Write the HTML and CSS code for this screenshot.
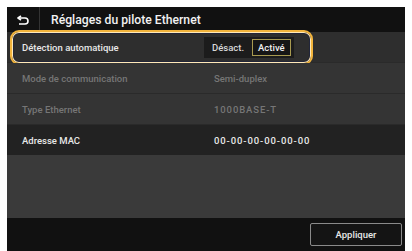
FILE: index.html
```html
<!DOCTYPE html>
<html lang="fr">
  <head>
    <meta charset="UTF-8" />
    <meta name="viewport" content="width=device-width, initial-scale=1.0" />
    <title>Réglages du pilote Ethernet</title>
    <link rel="stylesheet" href="styles.css">
  </head>
  <body>
    <div class="screen">
      <header class="topbar">
        <span class="back">
          <svg width="12" height="10" viewBox="0 0 12 10">
            <path d="M4 1 L1 3 L4 5" fill="none" stroke="#fff" stroke-width="1.6" stroke-linejoin="round" />
            <path d="M1.5 3 H8 A3 3 0 0 1 8 9 H2" fill="none" stroke="#fff" stroke-width="1.6" />
          </svg>
        </span>
        <span class="title">Réglages du pilote Ethernet</span>
      </header>
      <div class="list">
        <div class="row selected">
          <span class="label">Détection automatique</span>
          <span class="toggle">
            <span class="opt">Désact.</span>
            <span class="opt on">Activé</span>
          </span>
        </div>
        <div class="row disabled">
          <span class="label">Mode de communication</span>
          <span class="value">Semi-duplex</span>
        </div>
        <div class="row disabled">
          <span class="label">Type Ethernet</span>
          <span class="value wide">1000BASE-T</span>
        </div>
        <div class="row dark">
          <span class="label">Adresse MAC</span>
          <span class="value wide">00-00-00-00-00-00</span>
        </div>
        <div class="empty"></div>
      </div>
      <footer class="bottombar">
        <button class="apply">Appliquer</button>
      </footer>
    </div>
  </body>
</html>
```

FILE: styles.css
```css
body,
html {
  margin: 0;
  background-color: #fff;
  font-family: Roboto, "Liberation Sans", sans-serif;
}

body {
  padding: 7px 7px 0 7px;
}

.screen {
  width: 398px;
  height: 244px;
  background-color: #111;
  display: flex;
  flex-direction: column;
}

.topbar {
  height: 25px;
  display: flex;
  align-items: center;
  flex-shrink: 0;
}

.back {
  width: 33px;
  height: 25px;
  display: flex;
  align-items: center;
  justify-content: center;
  border-right: 1px solid #333;
  box-sizing: border-box;
}

.title {
  color: #f2f2f2;
  font-size: 12.2px;
  font-weight: 500;
  padding-left: 11px;
}

.list {
  flex: 1;
  display: flex;
  flex-direction: column;
  background-color: #3a3a3a;
}

.row {
  height: 30px;
  display: flex;
  align-items: center;
  background-color: #343434;
  border-bottom: 1px solid #2a2a2a;
  font-size: 9.5px;
  font-weight: 500;
  position: relative;
  flex-shrink: 0;
}

.label {
  width: 192px;
  padding-left: 15px;
  color: #e8e8e8;
}

.value {
  color: #e8e8e8;
}

.value.wide {
  letter-spacing: 0.9px;
}

.disabled .label,
.disabled .value {
  color: #767676;
}

.dark {
  background-color: #222;
  border-bottom: none;
}

.selected {
  background-color: #2e2e2e;
}

.selected::after {
  content: "";
  position: absolute;
  left: 3px;
  top: -2px;
  width: 299px;
  height: 31px;
  border: 2.5px solid #f2b43c;
  border-radius: 9px;
  box-shadow: inset 0 0 0 1px #ffe9b8, inset 0 0 0 2px #22263a;
}

.toggle {
  display: flex;
  align-items: center;
  gap: 3px;
  margin-left: -10px;
  background-color: #1c1c1c;
  padding: 2px 3px;
}

.opt {
  color: #d8d8d8;
  padding: 2px 5px;
}

.opt.on {
  border: 1px solid #a89a50;
  background-color: #161616;
  color: #f0f0f0;
}

.empty {
  flex: 1;
}

.bottombar {
  height: 33px;
  flex-shrink: 0;
  display: flex;
  align-items: center;
  justify-content: flex-end;
  padding-right: 3px;
}

.apply {
  width: 92px;
  height: 23px;
  background-color: #141414;
  border: 1.5px solid #8a8a8a;
  border-radius: 2px;
  color: #e8e8e8;
  font-family: Roboto, "Liberation Sans", sans-serif;
  font-size: 9.5px;
  font-weight: 500;
  padding: 0;
}
```
